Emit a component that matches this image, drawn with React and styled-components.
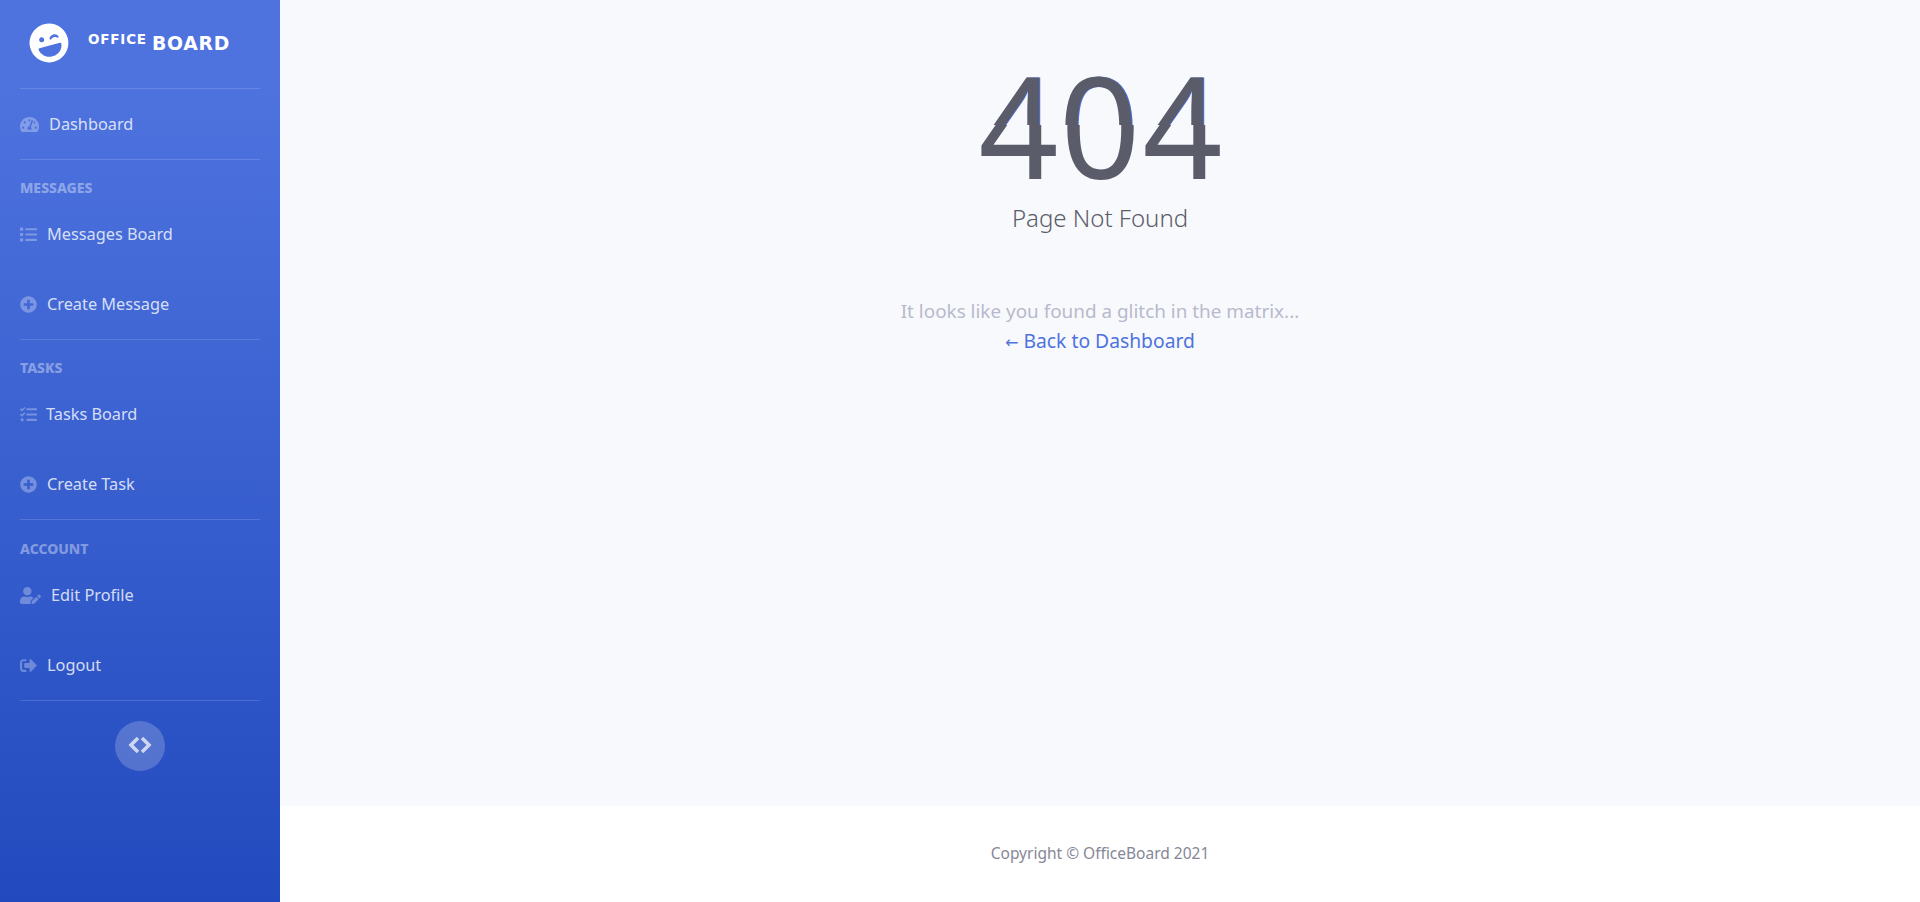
import React from 'react';
import styled, { createGlobalStyle } from 'styled-components';
import {
  FaLaughWink,
  FaList,
  FaPlusCircle,
  FaSignOutAlt,
  FaTachometerAlt,
  FaTasks,
  FaUserEdit,
} from 'react-icons/fa';

const GlobalStyle = createGlobalStyle`
  html, body {
    margin: 0;
    height: 100%;
  }
  body {
    font-family: "Noto Sans", "Open Sans", sans-serif;
    background-color: #f8f9fc;
  }
`;

const Wrapper = styled.div`
  display: flex;
  height: 902px;
  overflow: hidden;
`;

const Sidebar = styled.nav`
  flex: 0 0 280px;
  display: flex;
  flex-direction: column;
  padding: 0 20px;
  box-sizing: border-box;
  background-color: #4e73df;
  background-image: linear-gradient(180deg, #4e73df 10%, #224abe 100%);
`;

const Brand = styled.a`
  height: 88px;
  display: flex;
  align-items: center;
  padding-left: 9px;
  color: #ffffff;
  font-family: "DejaVu Sans", sans-serif;
  font-weight: 700;
  svg {
    font-size: 40px;
    transform: rotate(-15deg);
    margin-top: -3px;
  }
`;

const BrandText = styled.div`
  margin: -2px 0 0 19px;
  font-size: 18.8px;
  letter-spacing: 0.8px;
  white-space: nowrap;
  sup {
    font-size: 13.5px;
    line-height: 0;
    vertical-align: 6px;
    margin-right: 5px;
  }
`;

const Divider = styled.hr`
  flex: none;
  width: 100%;
  height: 1px;
  margin: 0;
  border: 0;
  background-color: rgba(255, 255, 255, 0.15);
`;

const Heading = styled.div`
  padding: ${(props) => props.$top || 18}px 0 2px;
  font-size: 14px;
  line-height: 19px;
  font-weight: 800;
  text-transform: uppercase;
  color: rgba(255, 255, 255, 0.4);
`;

const NavItem = styled.a`
  height: 70px;
  display: flex;
  align-items: center;
  gap: ${(props) => props.$gap || 10}px;
  color: rgba(255, 255, 255, 0.8);
  font-size: 16.3px;
  svg {
    flex: none;
    width: ${(props) => props.$iconWidth || 17}px;
    height: 17px;
    color: rgba(255, 255, 255, 0.3);
  }
`;

const Toggle = styled.button`
  align-self: center;
  width: 50px;
  height: 50px;
  margin-top: 20px;
  padding: 0;
  border: 0;
  border-radius: 50%;
  display: flex;
  align-items: center;
  justify-content: center;
  background-color: rgba(255, 255, 255, 0.2);
  svg {
    width: 24px;
    height: 18px;
    margin-top: -3px;
  }
`;

const Main = styled.div`
  flex: 1;
  display: flex;
  flex-direction: column;
`;

const Content = styled.main`
  flex: 1;
  display: flex;
  flex-direction: column;
  align-items: center;
  padding-top: 55px;
  background-color: #f8f9fc;
`;

const ErrorCode = styled.div`
  position: relative;
  padding-left: 3px;
  font-size: 140px;
  line-height: 140px;
  font-weight: 400;
  letter-spacing: 2px;
  color: #5a5c69;
  span {
    visibility: hidden;
  }
  &::before,
  &::after {
    content: attr(data-text);
    position: absolute;
    top: 0;
    left: 3px;
    width: 100%;
  }
  &::before {
    left: 1px;
    text-shadow: 1px 0 #4e73df;
    clip-path: inset(0 -4px 50% -4px);
  }
  &::after {
    clip-path: inset(50% -4px 0 -4px);
  }
`;

const ErrorTitle = styled.p`
  margin: 6px 0 0;
  font-size: 24px;
  line-height: 34px;
  font-weight: 300;
  color: #5a5c69;
`;

const ErrorText = styled.p`
  margin: 61px 0 0;
  font-size: 18.9px;
  line-height: 30px;
  color: #b7b9cc;
`;

const BackLink = styled.a`
  font-size: 19.3px;
  line-height: 30px;
  color: #4e73df;
`;

const BackArrow = styled.span`
  font-family: "DejaVu Sans", sans-serif;
  font-size: 16px;
`;

const Footer = styled.footer`
  flex: 0 0 96px;
  box-sizing: border-box;
  padding-bottom: 2px;
  display: flex;
  align-items: center;
  justify-content: center;
  background-color: #ffffff;
  color: #858796;
  font-size: 15.5px;
`;

const ToggleIcon = () => (
  <svg viewBox="0 0 24 18" fill="none" stroke="rgba(255, 255, 255, 0.7)" strokeWidth="3.6">
    <path d="M10 2 L3 9 L10 16" />
    <path d="M14 2 L21 9 L14 16" />
  </svg>
);

const App = () => (
  <Wrapper>
    <GlobalStyle />
    <Sidebar>
      <Brand>
        <FaLaughWink />
        <BrandText><sup>OFFICE</sup>BOARD</BrandText>
      </Brand>
      <Divider />
      <NavItem $iconWidth={19}><FaTachometerAlt />Dashboard</NavItem>
      <Divider />
      <Heading>Messages</Heading>
      <NavItem><FaList />Messages Board</NavItem>
      <NavItem><FaPlusCircle />Create Message</NavItem>
      <Divider />
      <Heading>Tasks</Heading>
      <NavItem $gap={9}><FaTasks />Tasks Board</NavItem>
      <NavItem><FaPlusCircle />Create Task</NavItem>
      <Divider />
      <Heading $top={19}>Account</Heading>
      <NavItem $iconWidth={21}><FaUserEdit />Edit Profile</NavItem>
      <NavItem><FaSignOutAlt />Logout</NavItem>
      <Divider />
      <Toggle><ToggleIcon /></Toggle>
    </Sidebar>
    <Main>
      <Content>
        <ErrorCode data-text="404"><span>404</span></ErrorCode>
        <ErrorTitle>Page Not Found</ErrorTitle>
        <ErrorText>It looks like you found a glitch in the matrix...</ErrorText>
        <BackLink><BackArrow>←</BackArrow> Back to Dashboard</BackLink>
      </Content>
      <Footer>Copyright © OfficeBoard 2021</Footer>
    </Main>
  </Wrapper>
);

export default App;
